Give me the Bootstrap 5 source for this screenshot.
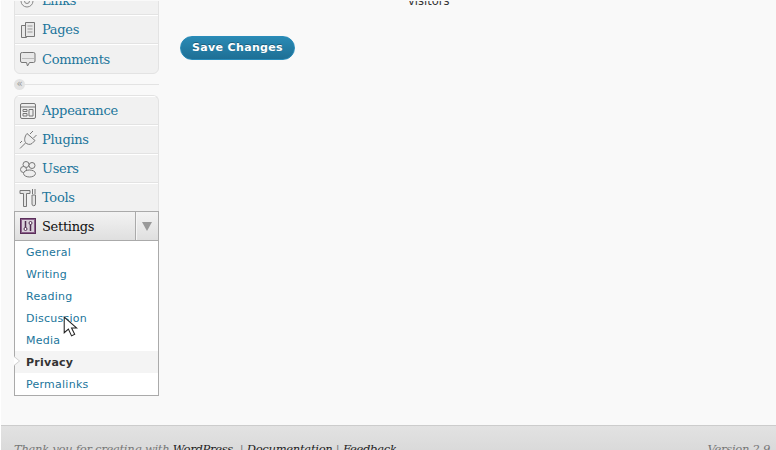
<!DOCTYPE html>
<html lang="en">
<head>
  <meta charset="UTF-8">
  <title>Privacy Settings</title>
  <meta name="viewport" content="width=device-width, initial-scale=1">
  <link href="https://cdn.jsdelivr.net/npm/bootstrap@5.3.7/dist/css/bootstrap.min.css" rel="stylesheet">
  <style>
    html, body { height: 450px; overflow: hidden; background: #fff; }
    .wp-shell { height: 450px; margin-left: 1px; background: #f9f9f9; padding-top: 1px; }
    .wp-main { height: 424px; overflow: hidden; }
    .wp-side { width: 145px; margin-left: 13px; margin-top: -16px; flex: none; }
    .wp-group { border: 1px solid #e3e3e3; border-radius: 6px; background: #f1f1f1; overflow: hidden; }
    .wp-group.wp-open { border-bottom: 0; border-radius: 6px 6px 0 0; }
    .wp-item { height: 29px; padding-left: 3px; gap: 4px; border-top: 1px solid #fff; border-bottom: 1px solid #e3e3e3;
      font: 13px/1 "DejaVu Serif", Georgia, serif; letter-spacing: -.3px; color: #21759b; text-decoration: none; }
    .wp-group > .wp-item:last-child { border-bottom: 0; }
    .wp-open > .wp-item:last-child { height: 28px; }
    .wp-item svg { width: 20px; height: 20px; flex: none; }
    .wp-sep { height: 21px; position: relative; }
    .wp-sep::after { content: ""; position: absolute; left: 10px; right: 0; top: 10px; border-top: 1px solid #e3e3e3; }
    .wp-collapse { position: absolute; z-index: 1; left: 0; top: 5px; width: 11px; height: 11px; border-radius: 50%; background: #e3e3e3;
      color: #999; font: 10px/9px "DejaVu Sans", sans-serif; text-align: center; }
    .wp-head { height: 29px; border: 1px solid #aaa; border-bottom: 0; background: linear-gradient(#f3f3f3, #dfdfdf); }
    .wp-head-label { gap: 6px; padding-left: 5px; font: 13px/1 "DejaVu Serif", Georgia, serif; letter-spacing: -.3px; color: #111; }
    .wp-head-label svg { width: 16px; height: 16px; }
    .wp-toggle { width: 23px; border-left: 1px solid #aaa; box-shadow: inset 1px 0 #f5f5f5; }
    .wp-tri { width: 0; height: 0; border: 5px solid transparent; border-top: 9px solid #999; border-bottom: 0; }
    .wp-sub { border: 1px solid #aaa; background: #fff; }
    .wp-sub a { display: block; height: 22px; padding-left: 11px; font: 11px/24px "DejaVu Sans", Verdana, sans-serif; letter-spacing: .25px; color: #21759b; text-decoration: none; }
    .wp-sub a.wp-current { background: #f4f4f4; color: #333; font-weight: 700; position: relative; }
    .wp-current::before { content: ""; position: absolute; left: -1px; top: 5px; border: 5px solid transparent; border-left: 6px solid #ccc; border-right: 0; }
    .wp-current::after { content: ""; position: absolute; left: -1px; top: 6px; border: 4px solid transparent; border-left: 5px solid #fff; border-right: 0; }
    .wp-cursor { position: absolute; left: 63px; top: 316px; width: 15px; height: 22px; z-index: 5; }
    .wp-content { padding-left: 21px; position: relative; flex: 1; }
    .wp-visitors { position: absolute; left: 249px; top: -7px; font: 11.5px/14px "DejaVu Sans", Verdana, sans-serif; color: #333; }
    .wp-save { margin-top: 35px; width: 115px; height: 24px; padding: 0; border: 1px solid #298cba; border-radius: 12px;
      background: linear-gradient(#2a8ab4, #1e6f95); color: #fff; font: 700 11px/20px "DejaVu Sans", Verdana, sans-serif; letter-spacing: .35px; text-shadow: 0 -1px 0 rgba(0,0,0,.3); }
    .wp-save:hover { background: #1e6f95; color: #fff; }
    .wp-foot { height: 25px; border-top: 1px solid #ccc; background: linear-gradient(#e2e2e2, #dadada); padding: 15px 6px 0 13px; overflow: hidden;
      font: italic 11.5px/16px "DejaVu Serif", Georgia, serif; letter-spacing: -.27px; color: #777; }
    .wp-foot a { color: #222; text-decoration: none; }
  </style>
</head>
<body>
<div class="wp-shell">
  <div class="wp-main d-flex">
    <nav class="wp-side">
      <div class="wp-group">
        <a class="wp-item d-flex align-items-center" href="#"><svg viewBox="0 0 20 20" fill="none" stroke="#888"><circle cx="9" cy="10" r="6"/><circle cx="9" cy="10" r="2.500"/><path d="M11 8l5-5"/></svg>Links</a>
        <a class="wp-item d-flex align-items-center" href="#"><svg viewBox="0 0 20 20" fill="#e8e8e8" stroke="#777"><path d="M3.500 5.500h5v12h-5z"/><path d="M7.500 2.500h9v14h-9z"/><path d="M9.500 6h5M9.500 9h5M9.500 12h5" stroke="#999"/></svg>Pages</a>
        <a class="wp-item d-flex align-items-center" href="#"><svg viewBox="0 0 20 20" fill="#e8e8e8" stroke="#777"><path d="M4.500 3.500h11a1.500 1.500 0 0 1 1.500 1.500v7a1.500 1.500 0 0 1-1.500 1.500h-4l-2 3.500-1-3.500h-4.500a1.500 1.500 0 0 1-1.500-1.500v-7a1.500 1.500 0 0 1 1.500-1.500z"/><path d="M4 9.500h12" stroke="#bbb"/></svg>Comments</a>
      </div>
      <div class="wp-sep"><span class="wp-collapse">«</span></div>
      <div class="wp-group wp-open">
        <a class="wp-item d-flex align-items-center" href="#"><svg viewBox="0 0 20 20" fill="#eee" stroke="#777"><rect x="2.500" y="2.500" width="15" height="15" rx="1.500"/><path d="M2.500 6h15" fill="none"/><path d="M5 8.500h4v2H5zM5 12.500h4v2.500H5zM11 8.500h4v6.500h-4z"/></svg>Appearance</a>
        <a class="wp-item d-flex align-items-center" href="#"><svg viewBox="0 0 20 20" fill="#eee" stroke="#777"><path d="M9 3.500l8 7-3 3c-2 1.500-5 1-6.500-1s-1-6 1.500-9z"/><path d="M12 4l3-3M15.500 8l3-3M7.500 13l-5.500 5.500M4 11l-2 2" fill="none"/></svg>Plugins</a>
        <a class="wp-item d-flex align-items-center" href="#"><svg viewBox="0 0 20 20" fill="#eee" stroke="#777"><circle cx="8" cy="5.500" r="3"/><circle cx="14" cy="6.500" r="3"/><circle cx="5.500" cy="10.500" r="3"/><ellipse cx="11.500" cy="14.500" rx="6" ry="3.500"/></svg>Users</a>
        <a class="wp-item d-flex align-items-center" href="#"><svg viewBox="0 0 20 20" fill="#e4e4e4" stroke="#777"><path d="M2 2.500h10v3H8.500v13h-3v-13H2z"/><path d="M14.500 1v5M17 1v5" fill="none"/><path d="M14 7h3.500v9a1.750 1.750 0 0 1-3.500 0z"/></svg>Tools</a>
      </div>
      <div class="wp-head d-flex">
        <div class="wp-head-label d-flex align-items-center flex-grow-1"><svg viewBox="0 0 16 16" fill="none"><rect x=".5" y=".5" width="15" height="15" fill="#d9d0da" stroke="#5a2f5a"/><rect x="1.500" y="1.500" width="13" height="13" stroke="#8a5f8a"/><path d="M5.500 3v7M10.500 6v7" stroke="#4d2a4d" stroke-width="1.500"/><circle cx="5.500" cy="11" r="1.500" fill="#fff" stroke="#4d2a4d"/><circle cx="10.500" cy="5" r="1.500" fill="#fff" stroke="#4d2a4d"/></svg>Settings</div>
        <div class="wp-toggle d-flex align-items-center justify-content-center"><span class="wp-tri"></span></div>
      </div>
      <div class="wp-sub">
        <a href="#">General</a>
        <a href="#">Writing</a>
        <a href="#">Reading</a>
        <a href="#">Discussion</a>
        <a href="#">Media</a>
        <a href="#" class="wp-current">Privacy</a>
        <a href="#">Permalinks</a>
      </div>
    </nav>
    <div class="wp-content">
      <span class="wp-visitors">visitors</span>
      <button type="button" class="btn wp-save">Save Changes</button>
    </div>
  </div>
  <footer class="wp-foot d-flex justify-content-between">
    <span>Thank you for creating with <a href="#">WordPress</a>. | <a href="#">Documentation</a> | <a href="#">Feedback</a></span>
    <span>Version 2.9</span>
  </footer>
</div>
<svg class="wp-cursor" viewBox="0 0 14 21"><path d="M1 1v15l4-3.500 3 6.500 3-1.500-3-6h5z" fill="#fff" stroke="#222"/></svg>
<script src="https://cdn.jsdelivr.net/npm/bootstrap@5.3.7/dist/js/bootstrap.bundle.min.js"></script>
</body>
</html>
